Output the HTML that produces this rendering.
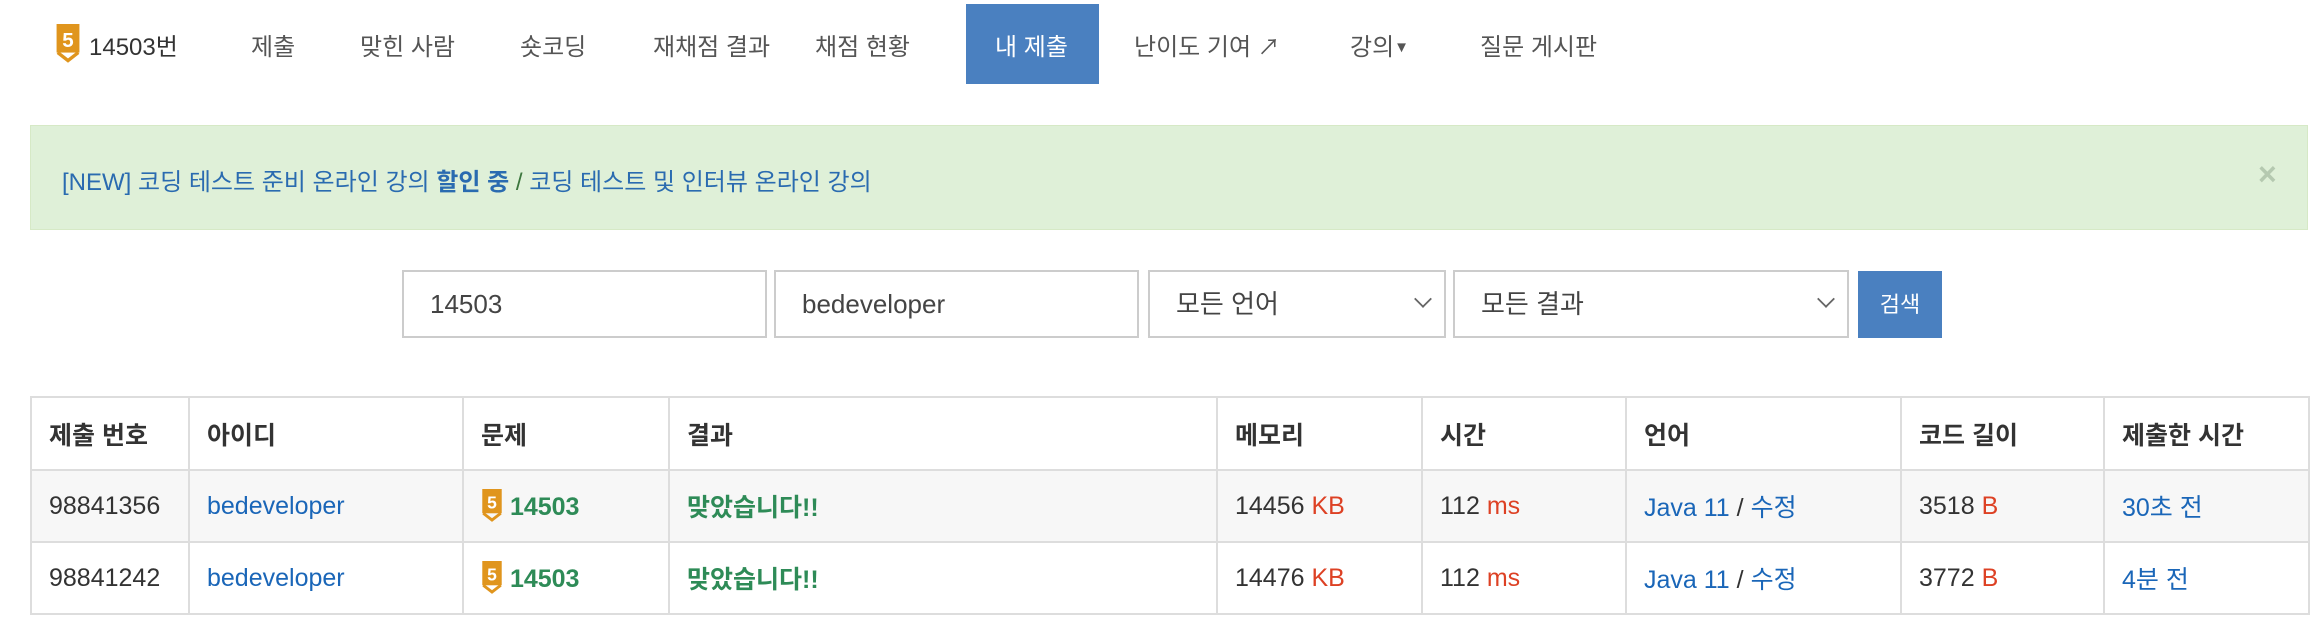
<!DOCTYPE html>
<html><head><meta charset="utf-8"><style>
body{margin:0;width:2316px;height:620px;background:#fff;font-family:"Liberation Sans","Noto Sans CJK KR",sans-serif;color:#333;position:relative;overflow:hidden}
.a{position:absolute;white-space:nowrap}
.nav{font-size:24px;top:27px;color:#555}
.act{position:absolute;left:966px;top:4px;width:133px;height:80px;background:#4a80c0}
.banner{position:absolute;left:30px;top:125px;width:2276px;height:103px;background:#dff0d8;border:1px solid #d6e9c6}
.inp{position:absolute;top:270px;height:68px;border:2px solid #ccc;box-sizing:border-box;font-size:26px;color:#444;padding-left:26px;line-height:64px;background:#fff}
.chev{position:absolute;right:14px;top:20px;width:12px;height:12px;border-right:2px solid #666;border-bottom:2px solid #666;transform:rotate(45deg) scale(0.9)}
table{position:absolute;left:30px;top:396px;width:2278px;border-collapse:collapse;font-size:25px;table-layout:fixed}
td,th{border:2px solid #ddd;padding:0 0 0 17px;text-align:left;height:70px;white-space:nowrap}
th{font-weight:bold;color:#333;height:71px}
tr.g td{background:#f7f7f7}
.l{color:#1a66b8}
.r{color:#dd4124}
.ok{color:#2e8b57;font-weight:bold}
</style></head><body>
<div class="act"></div>
<svg class="a" style="left:55px;top:24px" width="26" height="40" viewBox="0 0 22 35"><rect x="1" y="0" width="20" height="25" fill="#e0951d"/><polyline points="2,25 11,32 20,25" fill="none" stroke="#e0951d" stroke-width="3"/><text x="11" y="20" font-size="18" font-weight="bold" fill="#fff" text-anchor="middle" font-family="Liberation Sans">5</text></svg>
<div class="a nav" style="left:89px;color:#333">14503번</div>
<div class="a nav" style="left:251px">제출</div>
<div class="a nav" style="left:360px">맞힌 사람</div>
<div class="a nav" style="left:520px">숏코딩</div>
<div class="a nav" style="left:653px">재채점 결과</div>
<div class="a nav" style="left:815px">채점 현황</div>
<div class="a nav" style="left:995px;color:#fff">내 제출</div>
<div class="a nav" style="left:1134px">난이도 기여 <span style="font-size:22px">&#x2197;</span></div>
<div class="a nav" style="left:1350px">강의<span style="font-size:15px;vertical-align:3px">▼</span></div>
<div class="a nav" style="left:1480px">질문 게시판</div>
<div class="banner"></div>
<div class="a" style="left:62px;top:162px;font-size:24px;color:#2a6bb0">[NEW] 코딩 테스트 준비 온라인 강의 <b>할인 중</b> <span style="color:#3c763d">/</span> 코딩 테스트 및 인터뷰 온라인 강의</div>
<div class="a" style="left:2258px;top:156px;font-size:32px;color:#b5c9b0;font-weight:bold">×</div>
<div class="inp" style="left:402px;width:365px">14503</div>
<div class="inp" style="left:774px;width:365px">bedeveloper</div>
<div class="inp" style="left:1148px;width:298px">모든 언어<div class="chev"></div></div>
<div class="inp" style="left:1453px;width:396px">모든 결과<div class="chev"></div></div>
<div class="a" style="left:1858px;top:271px;width:84px;height:67px;background:#4a80c0;color:#fff;font-size:22px;text-align:center;line-height:67px">검색</div>
<table>
<colgroup><col style="width:158px"><col style="width:274px"><col style="width:206px"><col style="width:548px"><col style="width:205px"><col style="width:204px"><col style="width:275px"><col style="width:203px"><col style="width:205px"></colgroup>
<tr><th>제출 번호</th><th>아이디</th><th>문제</th><th>결과</th><th>메모리</th><th>시간</th><th>언어</th><th>코드 길이</th><th>제출한 시간</th></tr>
<tr class="g"><td>98841356</td><td class="l">bedeveloper</td><td class="ok"><svg width="22" height="34" viewBox="0 0 22 35" style="vertical-align:-8px"><rect x="1" y="0" width="20" height="25" fill="#e0951d"/><polyline points="2,25 11,32 20,25" fill="none" stroke="#e0951d" stroke-width="3"/><text x="11" y="20" font-size="18" font-weight="bold" fill="#fff" text-anchor="middle">5</text></svg> 14503</td><td class="ok">맞았습니다!!</td><td>14456 <span class="r">KB</span></td><td>112 <span class="r">ms</span></td><td><span class="l">Java 11</span> / <span class="l">수정</span></td><td>3518 <span class="r">B</span></td><td class="l">30초 전</td></tr>
<tr><td>98841242</td><td class="l">bedeveloper</td><td class="ok"><svg width="22" height="34" viewBox="0 0 22 35" style="vertical-align:-8px"><rect x="1" y="0" width="20" height="25" fill="#e0951d"/><polyline points="2,25 11,32 20,25" fill="none" stroke="#e0951d" stroke-width="3"/><text x="11" y="20" font-size="18" font-weight="bold" fill="#fff" text-anchor="middle">5</text></svg> 14503</td><td class="ok">맞았습니다!!</td><td>14476 <span class="r">KB</span></td><td>112 <span class="r">ms</span></td><td><span class="l">Java 11</span> / <span class="l">수정</span></td><td>3772 <span class="r">B</span></td><td class="l">4분 전</td></tr>
</table>
</body></html>
